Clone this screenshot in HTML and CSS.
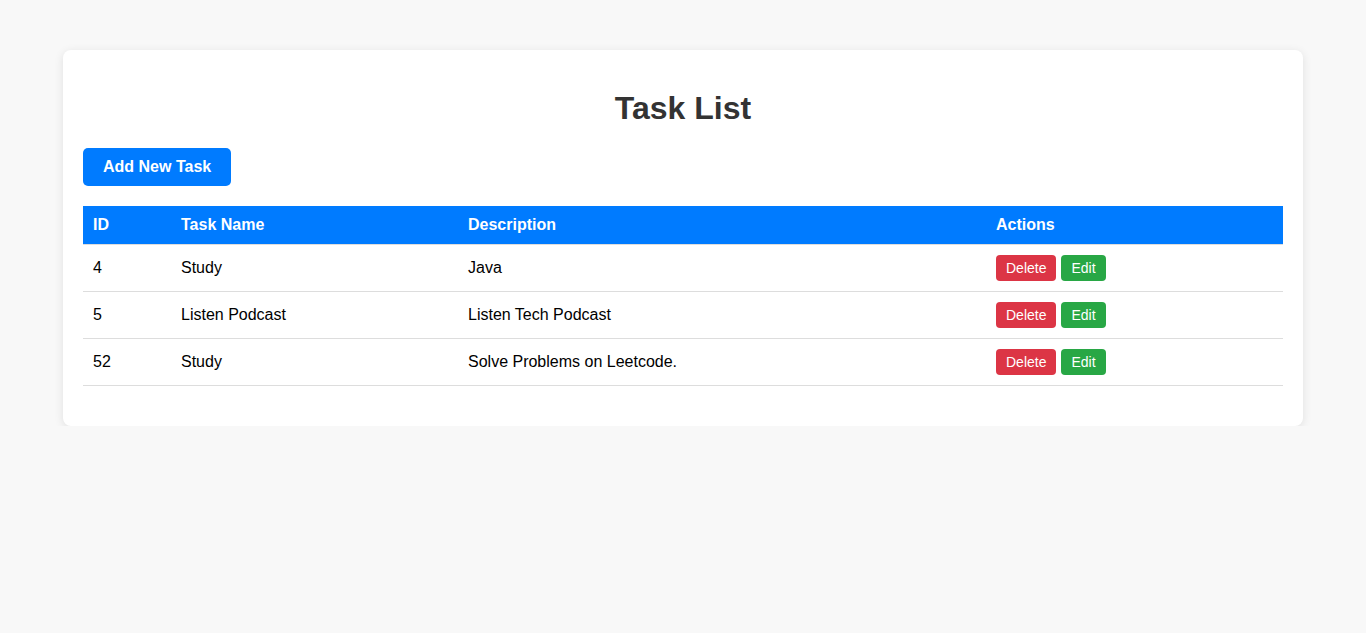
FILE: index.html
```html
<!DOCTYPE html>
<html lang="en">
<head>
<meta charset="utf-8">
<title>Task List</title>
<link rel="stylesheet" href="styles.css">
</head>
<body>
<div class="container">
  <h1 class="title">Task List</h1>
  <button class="btn-add">Add New Task</button>
  <table class="tasks">
    <thead>
      <tr>
        <th class="c-id">ID</th>
        <th class="c-name">Task Name</th>
        <th class="c-desc">Description</th>
        <th class="c-act">Actions</th>
      </tr>
    </thead>
    <tbody>
      <tr>
        <td>4</td>
        <td>Study</td>
        <td>Java</td>
        <td><button class="btn btn-del">Delete</button><button class="btn btn-edit">Edit</button></td>
      </tr>
      <tr>
        <td>5</td>
        <td>Listen Podcast</td>
        <td>Listen Tech Podcast</td>
        <td><button class="btn btn-del">Delete</button><button class="btn btn-edit">Edit</button></td>
      </tr>
      <tr>
        <td>52</td>
        <td>Study</td>
        <td>Solve Problems on Leetcode.</td>
        <td><button class="btn btn-del">Delete</button><button class="btn btn-edit">Edit</button></td>
      </tr>
    </tbody>
  </table>
</div>
</body>
</html>
```
FILE: styles.css
```css
html, body {
  margin: 0;
  padding: 0;
}
body {
  background: #f8f8f8;
  font-family: "Liberation Sans", Arial, sans-serif;
  color: #000;
}
.container {
  width: 1200px;
  margin: 50px auto 0;
  padding: 20px;
  background: #fff;
  border-radius: 8px;
  box-shadow: 0 2px 10px rgba(0, 0, 0, 0.1);
}
.title {
  margin: 20px 0 21px;
  text-align: center;
  font-size: 32px;
  font-weight: bold;
  color: #333;
  line-height: 37px;
}
.btn-add {
  display: block;
  background: #007bff;
  color: #fff;
  border: none;
  border-radius: 5px;
  padding: 10px 20px;
  font-family: "Liberation Sans", Arial, sans-serif;
  font-size: 16px;
  font-weight: bold;
  line-height: 18px;
  cursor: pointer;
}
.tasks {
  width: 100%;
  margin: 20px 0 20px;
  border-collapse: collapse;
  font-size: 16px;
}
.tasks th,
.tasks td {
  padding: 10px;
  border-bottom: 1px solid #ddd;
  line-height: 18px;
  vertical-align: middle;
}
.tasks th {
  background: #007bff;
  color: #fff;
  text-align: left;
  font-weight: bold;
}
.c-id { width: 68px; }
.c-name { width: 267px; }
.c-desc { width: 508px; }
.btn {
  border: none;
  border-radius: 4px;
  color: #fff;
  padding: 5px 10px;
  font-family: "Liberation Sans", Arial, sans-serif;
  font-size: 14px;
  line-height: 16px;
  vertical-align: middle;
  cursor: pointer;
}
.btn-del {
  background: #dc3545;
  margin-right: 5px;
}
.btn-edit {
  background: #28a745;
}
```
